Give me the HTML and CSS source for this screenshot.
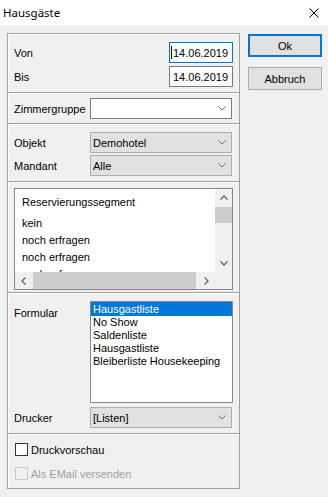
FILE: index.html
```html
<!DOCTYPE html>
<html>
<head>
  <meta charset="UTF-8">
  <title>Hausgäste</title>
  <link rel="stylesheet" href="styles.css">
</head>
<body>
  <div class="titlebar">
    <span class="title">Hausgäste</span>
    <svg class="close" width="10" height="10" viewBox="0 0 10 10">
      <path d="M0.5 0.5L9.5 9.5M9.5 0.5L0.5 9.5" stroke="#000" stroke-width="1" fill="none"/>
    </svg>
  </div>

  <div class="client">
    <div class="panel">
      <div class="section dates">
        <div class="row">
          <span class="label">Von</span>
          <div class="edit focused"><span class="caret"></span>14.06.2019</div>
        </div>
        <div class="row">
          <span class="label">Bis</span>
          <div class="edit">14.06.2019</div>
        </div>
      </div>

      <div class="section group">
        <div class="row">
          <span class="label">Zimmergruppe</span>
          <div class="combo">
            <span class="combo-text"></span>
            <svg class="drop" width="8" height="5" viewBox="0 0 8 5"><path d="M0.5 0.5L4 4L7.5 0.5" stroke="#707070" fill="none"/></svg>
          </div>
        </div>
      </div>

      <div class="section object">
        <div class="row">
          <span class="label">Objekt</span>
          <div class="combo readonly">
            <span class="combo-text">Demohotel</span>
            <svg class="drop" width="8" height="5" viewBox="0 0 8 5"><path d="M0.5 0.5L4 4L7.5 0.5" stroke="#707070" fill="none"/></svg>
          </div>
        </div>
        <div class="row">
          <span class="label">Mandant</span>
          <div class="combo readonly">
            <span class="combo-text">Alle</span>
            <svg class="drop" width="8" height="5" viewBox="0 0 8 5"><path d="M0.5 0.5L4 4L7.5 0.5" stroke="#707070" fill="none"/></svg>
          </div>
        </div>
      </div>

      <div class="section segments">
        <div class="grid">
          <div class="grid-body">
            <div class="grid-head">Reservierungssegment</div>
            <div class="grid-row">kein</div>
            <div class="grid-row">noch erfragen</div>
            <div class="grid-row">noch erfragen</div>
            <div class="grid-row">noch erfragen</div>
          </div>
          <div class="vscroll">
            <div class="sbtn">
              <svg width="8" height="5" viewBox="0 0 8 5"><path d="M0.5 4.5L4 1L7.5 4.5" stroke="#606060" stroke-width="1.3" fill="none"/></svg>
            </div>
            <div class="vtrack"><div class="vthumb"></div></div>
            <div class="sbtn">
              <svg width="8" height="5" viewBox="0 0 8 5"><path d="M0.5 0.5L4 4L7.5 0.5" stroke="#606060" stroke-width="1.3" fill="none"/></svg>
            </div>
          </div>
          <div class="hscroll">
            <div class="sbtn">
              <svg width="5" height="8" viewBox="0 0 5 8"><path d="M4.5 0.5L1 4L4.5 7.5" stroke="#606060" stroke-width="1.3" fill="none"/></svg>
            </div>
            <div class="htrack"><div class="hthumb"></div></div>
            <div class="sbtn">
              <svg width="5" height="8" viewBox="0 0 5 8"><path d="M0.5 0.5L4 4L0.5 7.5" stroke="#606060" stroke-width="1.3" fill="none"/></svg>
            </div>
          </div>
          <div class="corner"></div>
        </div>
      </div>

      <div class="section forms">
        <div class="row tall">
          <span class="label top">Formular</span>
          <div class="listbox">
            <div class="item selected">Hausgastliste</div>
            <div class="item">No Show</div>
            <div class="item">Saldenliste</div>
            <div class="item">Hausgastliste</div>
            <div class="item">Bleiberliste Housekeeping</div>
          </div>
        </div>
        <div class="row">
          <span class="label">Drucker</span>
          <div class="combo readonly">
            <span class="combo-text">[Listen]</span>
            <svg class="drop" width="8" height="5" viewBox="0 0 8 5"><path d="M0.5 0.5L4 4L7.5 0.5" stroke="#707070" fill="none"/></svg>
          </div>
        </div>
      </div>

      <div class="section options">
        <div class="check-row">
          <span class="check"></span>
          <span>Druckvorschau</span>
        </div>
        <div class="check-row disabled">
          <span class="check"></span>
          <span>Als EMail versenden</span>
        </div>
      </div>
    </div>

    <div class="buttons">
      <div class="btn default">Ok</div>
      <div class="btn">Abbruch</div>
    </div>
  </div>
</body>
</html>
```

FILE: styles.css
```css
body {
  width: 328px;
  height: 497px;
  margin: 0;
  overflow: hidden;
  background: #f0f0f0;
  font-family: "Liberation Sans", Arial, sans-serif;
  font-size: 11px;
  color: #000;
}

.titlebar {
  height: 25px;
  background: #fff;
  display: flex;
  align-items: center;
  justify-content: space-between;
  padding: 0 9px 0 3px;
}

.title {
  font-family: "Noto Sans", sans-serif;
  font-size: 11.5px;
}

.client {
  display: flex;
  gap: 8px;
  padding: 8px 0 0 7px;
}

.panel {
  width: 233px;
  height: 456px;
  box-sizing: border-box;
  border: 1px solid #a0a0a0;
  box-shadow: inset 1px 1px 0 #fff;
}

.section {
  border-bottom: 1px solid #a0a0a0;
  padding: 0 6px;
}

.section + .section {
  border-top: 1px solid #fff;
}

.section:last-child {
  border-bottom: none;
}

.row {
  display: flex;
  align-items: center;
  justify-content: space-between;
  height: 21px;
}

.row.tall {
  height: auto;
  align-items: flex-start;
}

.label {
  width: 76px;
  flex: none;
}

.label.top {
  padding-top: 6px;
}

/* date section */
.dates {
  padding-top: 8px;
  padding-bottom: 5px;
  display: flex;
  flex-direction: column;
  gap: 3px;
}

.edit {
  width: 64px;
  height: 21px;
  box-sizing: border-box;
  border: 1px solid #7a7a7a;
  background: #fff;
  display: flex;
  align-items: center;
  padding-left: 3px;
}

.edit.focused {
  border-color: #0078d7;
  padding-left: 1px;
}

.caret {
  width: 1px;
  height: 13px;
  background: #000;
  margin-right: 1px;
}

/* combo boxes */
.group {
  padding-top: 4px;
  padding-bottom: 4px;
}

.object {
  padding-top: 7px;
  padding-bottom: 5px;
  display: flex;
  flex-direction: column;
  gap: 2px;
}

.combo {
  flex: 1;
  height: 21px;
  margin-right: 1px;
  box-sizing: border-box;
  border: 1px solid #7a7a7a;
  background: #fff;
  display: flex;
  align-items: center;
  justify-content: space-between;
  padding: 0 5px 0 2px;
}

.combo.readonly {
  background: #e1e1e1;
  border-color: #adadad;
}

.drop {
  flex: none;
}

/* segment grid */
.segments {
  padding-top: 5px;
  padding-bottom: 2px;
}

.grid {
  height: 102px;
  box-sizing: border-box;
  border: 1px solid #828790;
  background: #fff;
  display: grid;
  grid-template-columns: 1fr 17px;
  grid-template-rows: 1fr 17px;
}

.grid-body {
  overflow: hidden;
  padding-left: 7px;
}

.grid-head {
  height: 26px;
  line-height: 26px;
}

.grid-row {
  height: 17px;
  line-height: 17px;
}

.vscroll {
  background: #f0f0f0;
  display: flex;
  flex-direction: column;
}

.hscroll {
  background: #f0f0f0;
  display: flex;
}

.sbtn {
  width: 17px;
  height: 17px;
  flex: none;
  display: flex;
  align-items: center;
  justify-content: center;
}

.vtrack {
  flex: 1;
  padding-top: 1px;
}

.vthumb {
  height: 16px;
  background: #cdcdcd;
}

.htrack {
  flex: 1;
  padding: 0 1px;
}

.hthumb {
  width: 163px;
  height: 17px;
  background: #cdcdcd;
}

.corner {
  background: #f0f0f0;
}

/* formular list */
.forms {
  padding-top: 7px;
  padding-bottom: 5px;
  display: flex;
  flex-direction: column;
  gap: 4px;
}

.listbox {
  flex: 1;
  height: 102px;
  box-sizing: border-box;
  border: 1px solid #828790;
  background: #fff;
}

.item {
  height: 13px;
  line-height: 13px;
  padding-left: 2px;
}

.item.selected {
  background: #0078d7;
  color: #fff;
  height: 14px;
  line-height: 15px;
}

/* options */
.options {
  padding: 8px 7px 0;
  display: flex;
  flex-direction: column;
  gap: 11px;
}

.check-row {
  display: flex;
  align-items: center;
  gap: 3px;
  height: 13px;
}

.check {
  width: 13px;
  height: 13px;
  box-sizing: border-box;
  border: 1px solid #333;
  background: #fff;
}

.check-row.disabled {
  color: #a0a0a0;
}

.check-row.disabled .check {
  border-color: #cccccc;
  background: #f0f0f0;
}

/* buttons */
.buttons {
  display: flex;
  flex-direction: column;
  gap: 10px;
  padding-top: 1px;
}

.btn {
  width: 74px;
  height: 23px;
  box-sizing: border-box;
  background: #e1e1e1;
  border: 1px solid #adadad;
  display: flex;
  align-items: center;
  justify-content: center;
}

.btn.default {
  border-color: #0078d7;
  box-shadow: inset 0 0 0 1px #0078d7;
}
```
